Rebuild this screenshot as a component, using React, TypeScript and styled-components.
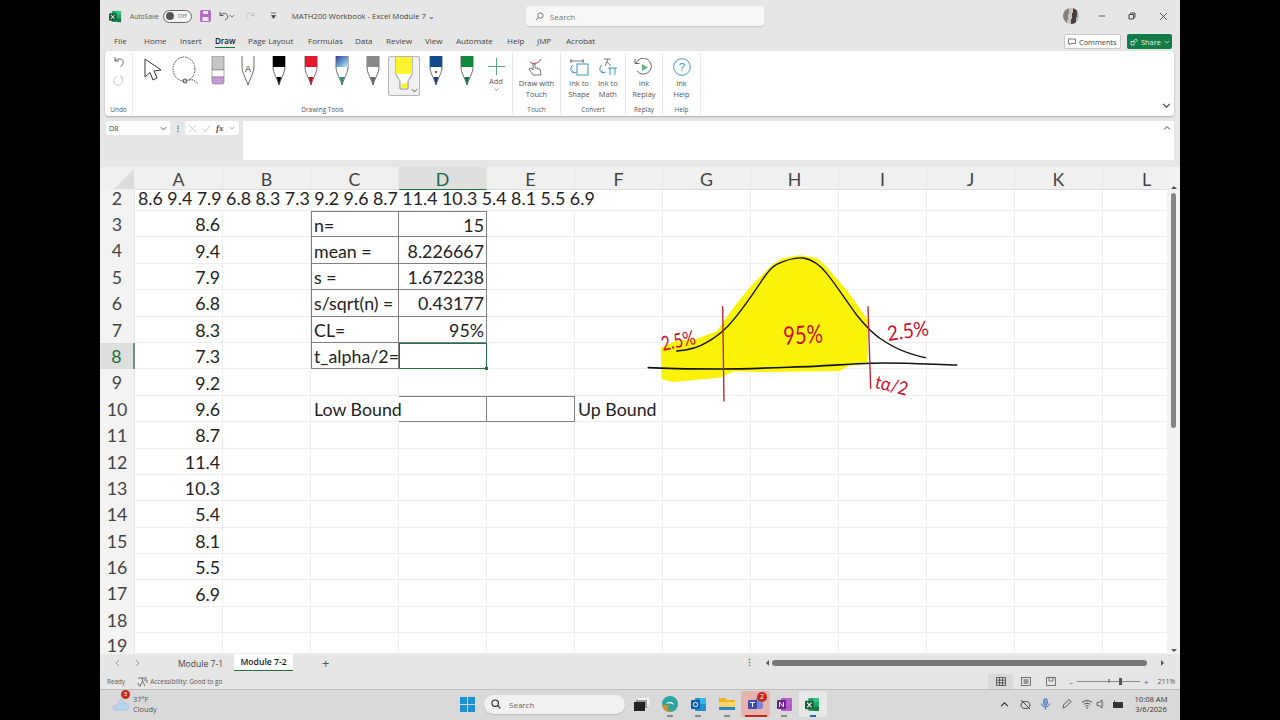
import React from "react";
import styled, { createGlobalStyle } from "styled-components";

const Global = createGlobalStyle`
  html, body { margin: 0; padding: 0; background: #000; }
  * { box-sizing: border-box; }
  body { font-family: "Open Sans", "Noto Sans", sans-serif; color: #333; }
`;

const Page = styled.div`
  width: 1280px;
  height: 720px;
  background: #000;
  display: flex;
  justify-content: center;
  overflow: hidden;
`;

const Win = styled.div`
  width: 1080px;
  height: 720px;
  background: #e6e6e6;
  display: flex;
  flex-direction: column;
  overflow: hidden;
`;

/* title bar */
const TitleBar = styled.div`
  height: 32px;
  display: flex;
  align-items: center;
  padding-left: 9px;
  font-size: 7.6px;
  color: #444;
`;
const AutoSave = styled.span`
  margin-left: 8px;
  font-size: 6.6px;
  color: #555;
`;
const Toggle = styled.span`
  width: 29px;
  height: 13px;
  margin-left: 4px;
  border: 1px solid #666;
  border-radius: 7px;
  background: #f4f4f4;
  display: flex;
  align-items: center;
  padding-left: 2px;
  gap: 4px;
  font-size: 6px;
  color: #666;
  &::before {
    content: "";
    width: 8px;
    height: 8px;
    border-radius: 50%;
    background: #555;
  }
`;
const QatIcon = styled.svg<{ $ml: number }>`
  margin-left: ${(p) => p.$ml}px;
  flex: none;
`;
const DocTitle = styled.span`
  margin-left: 15px;
  width: 234px;
  font-size: 7.7px;
  color: #444;
  white-space: nowrap;
`;
const SearchBox = styled.div`
  width: 238px;
  height: 20px;
  background: #f7f7f7;
  border-radius: 3px;
  box-shadow: 0 1px 1px #c9c9c9;
  display: flex;
  align-items: center;
  gap: 6px;
  padding-left: 9px;
  font-size: 8px;
  color: #777;
`;
const Avatar = styled.span`
  width: 16px;
  height: 16px;
  margin-left: 299px;
  border-radius: 50%;
  background: linear-gradient(100deg, #8b8078 0 35%, #c9c4bd 35% 55%, #4a3d3d 55% 80%, #a7bcc0 80%);
`;
const WinBtns = styled.div`
  margin-left: 19px;
  width: 70px;
  display: flex;
  justify-content: space-between;
  align-items: center;
`;

/* tabs */
const TabRow = styled.div`
  height: 19px;
  display: flex;
  align-items: center;
  padding: 0 8px 2px 14px;
  font-size: 8px;
  color: #444;
`;
const Tab = styled.span<{ $w: number; $on?: boolean }>`
  width: ${(p) => p.$w}px;
  flex: none;
  white-space: nowrap;
  position: relative;
  font-weight: ${(p) => (p.$on ? 600 : 400)};
  color: ${(p) => (p.$on ? "#222" : "#444")};
  ${(p) =>
    p.$on &&
    `&::after{content:"";position:absolute;left:0;width:20px;bottom:-2px;height:1.5px;background:#217346;}`}
`;
const TabBtns = styled.div`
  margin-left: auto;
  display: flex;
  gap: 6px;
  margin-top: 2px;
`;
const CommentBtn = styled.span`
  width: 57px;
  height: 15px;
  background: #fff;
  border: 1px solid #c8c8c8;
  border-radius: 2px;
  font-size: 7.4px;
  display: flex;
  align-items: center;
  gap: 3px;
  padding-left: 3px;
  color: #444;
`;
const ShareBtn = styled.span`
  width: 45px;
  height: 15px;
  background: #127c46;
  border-radius: 2px;
  color: #e6f3ec;
  font-size: 7.4px;
  display: flex;
  align-items: center;
  gap: 3px;
  padding-left: 3px;
`;

/* ribbon */
const Ribbon = styled.div`
  height: 65px;
  margin: 0 6px 0 5px;
  background: #fff;
  border-radius: 4px;
  box-shadow: 0 1px 2px #aaa;
  display: flex;
  position: relative;
`;
const Group = styled.div<{ $w: number }>`
  width: ${(p) => p.$w}px;
  flex: none;
  border-right: 1px solid #e8e8e8;
  margin: 2px 0 2px;
  display: flex;
  flex-direction: column;
`;
const GroupBody = styled.div<{ $gap?: number }>`
  flex: 1;
  display: flex;
  justify-content: center;
  gap: ${(p) => p.$gap ?? 0}px;
`;
const GroupLabel = styled.div`
  height: 9px;
  line-height: 9px;
  font-size: 6.4px;
  text-align: center;
  color: #555;
`;
const ToolStrip = styled.div`
  flex: 1;
  display: flex;
  align-items: flex-start;
  padding-left: 5px;
`;
const Tool = styled.div<{ $w: number; $selected?: boolean }>`
  width: ${(p) => p.$w}px;
  height: 40px;
  flex: none;
  display: flex;
  justify-content: center;
  margin-top: 3px;
  position: relative;
  ${(p) =>
    p.$selected &&
    `background:#f0f0f0;border:1px solid #b5b5b5;border-radius:2px;`}
`;
const RibbonBtn = styled.div`
  display: flex;
  flex-direction: column;
  align-items: center;
  padding-top: 5px;
  font-size: 7.5px;
  line-height: 10.5px;
  color: #555;
  text-align: center;
  white-space: nowrap;
  svg { margin-bottom: 2px; }
`;
const AddBtn = styled(RibbonBtn)`
  width: 28px;
  padding-top: 5px;
  svg:first-child { margin-bottom: 1px; }
`;
const UndoStack = styled.div`
  display: flex;
  flex-direction: column;
  align-items: center;
  gap: 6px;
  padding-top: 3px;
`;
const RibbonChevron = styled.svg`
  position: absolute;
  right: 3px;
  bottom: 6px;
`;

/* formula bar */
const FormulaBar = styled.div`
  height: 40px;
  margin: 5px 6px 0;
  display: flex;
  align-items: flex-start;
`;
const NameBox = styled.div`
  width: 64px;
  height: 14px;
  background: #fff;
  border-radius: 2px;
  font-size: 7.4px;
  line-height: 14px;
  padding-left: 3px;
  color: #444;
  position: relative;
`;
const Dots = styled.span`
  width: 15px;
  text-align: center;
  font-size: 8px;
  line-height: 13px;
  font-weight: 700;
  color: #666;
`;
const FxBox = styled.div`
  width: 54px;
  height: 14px;
  background: #fff;
  border-radius: 2px;
  display: flex;
  align-items: center;
  gap: 5px;
  padding-left: 3px;
  color: #bbb;
  font-size: 8px;
`;
const FxLabel = styled.i`
  font-family: "Liberation Serif", serif;
  font-weight: 700;
  color: #555;
  font-size: 9px;
`;
const FormulaInput = styled.div`
  flex: 1;
  height: 39px;
  margin-left: 4px;
  background: #fff;
  position: relative;
`;

/* sheet */
const SheetArea = styled.div`
  margin-top: 6px;
  height: 487px;
  display: flex;
  background: #fff;
`;
const GridWrap = styled.div`
  position: relative;
  flex: 1;
  overflow: hidden;
`;
const Grid = styled.div`
  display: grid;
  grid-template-columns: 35px repeat(12, 88px);
  grid-template-rows: 23px 21px repeat(16, 26.4px) 20.6px;
  font-family: Lato, "Liberation Sans", sans-serif;
  font-size: 17.8px;
  line-height: 16px;
  color: #222;
`;
const Corner = styled.div`
  background: #f0f0f0;
  position: relative;
  &::after {
    content: "";
    position: absolute;
    right: 1px;
    bottom: 1px;
    border-style: solid;
    border-width: 0 0 20px 20px;
    border-color: transparent transparent #dcdcdc transparent;
  }
`;
const ColHead = styled.div<{ $on?: boolean }>`
  background: ${(p) => (p.$on ? "#dedede" : "#f0f0f0")};
  color: ${(p) => (p.$on ? "#1c6b40" : "#444")};
  border-right: 1px solid #e6e6e6;
  border-bottom: 1px solid ${(p) => (p.$on ? "#217346" : "#dcdcdc")};
  display: flex;
  align-items: center;
  justify-content: center;
  padding-top: 1px;
`;
const RowHead = styled.div<{ $on?: boolean; $top?: number }>`
  background: ${(p) => (p.$on ? "#dcdfdd" : "#f3f3f3")};
  color: ${(p) => (p.$on ? "#1c6b40" : "#444")};
  border-right: ${(p) => (p.$on ? "2px solid #6f8f80" : "1px solid #e6e6e6")};
  display: flex;
  align-items: flex-start;
  padding-top: ${(p) => p.$top ?? 5}px;
  justify-content: center;
`;
const Cell = styled.div<{ $edges?: string; $right?: boolean; $span?: number; $open?: boolean }>`
  display: flex;
  align-items: center;
  justify-content: ${(p) => (p.$right ? "flex-end" : "flex-start")};
  padding: 1px 2px 0 ${(p) => (p.$edges?.includes("l") ? 2 : 3)}px;
  white-space: nowrap;
  grid-column: span ${(p) => p.$span ?? 1};
  border-right: ${(p) =>
    p.$open ? "0" : `1px solid ${p.$edges?.includes("r") ? "#808080" : "#eeeeee"}`};
  border-bottom: 1px solid ${(p) => (p.$edges?.includes("b") ? "#808080" : "#eeeeee")};
  border-top: ${(p) => (p.$edges?.includes("t") ? "1px solid #808080" : "0")};
  border-left: ${(p) => (p.$edges?.includes("l") ? "1px solid #808080" : "0")};
`;
const DataLine = styled(Cell)`
  align-items: flex-start;
  padding-top: 0;
`;
const ActiveCell = styled.div`
  border: 1px solid #217346;
  position: relative;
  &::after {
    content: "";
    position: absolute;
    right: -2px;
    bottom: -2px;
    width: 3px;
    height: 3px;
    background: #217346;
  }
`;
const InkLayer = styled.svg`
  position: absolute;
  left: 540px;
  top: 78px;
  width: 330px;
  height: 170px;
  pointer-events: none;
`;
const InkText = styled.text`
  font-family: "Lato", "Liberation Sans", sans-serif;
  font-weight: 400;
  fill: #c8102e;
`;
const VScroll = styled.div`
  width: 13px;
  background: #f2f2f2;
  display: flex;
  flex-direction: column;
  align-items: center;
  justify-content: space-between;
  padding: 19px 0 2px;
`;
const VThumb = styled.div`
  width: 5px;
  height: 235px;
  margin-top: 4px;
  margin-bottom: auto;
  border-radius: 3px;
  background: #858585;
`;

/* sheet tabs */
const SheetTabs = styled.div`
  height: 20px;
  display: flex;
  align-items: flex-start;
  font-size: 8.6px;
  color: #444;
  padding-left: 14px;
`;
const NavArrows = styled.div`
  width: 53px;
  height: 18px;
  display: flex;
  gap: 15px;
  align-items: center;
`;
const SheetTab = styled.div<{ $on?: boolean }>`
  height: ${(p) => (p.$on ? 17 : 20)}px;
  width: ${(p) => (p.$on ? 59 : 67)}px;
  display: flex;
  align-items: center;
  justify-content: center;
  background: ${(p) => (p.$on ? "#fff" : "transparent")};
  color: ${(p) => (p.$on ? "#222" : "#444")};
  font-weight: ${(p) => (p.$on ? 600 : 400)};
  border-bottom: ${(p) => (p.$on ? "1.5px solid #1f6f43" : "0")};
`;
const PlusBtn = styled.span`
  margin-left: 29px;
  line-height: 18px;
  font-size: 13px;
  color: #555;
`;
const SplitDots = styled.span`
  margin-left: 416px;
  line-height: 18px;
  font-size: 9px;
  font-weight: 700;
  color: #666;
`;
const HScroll = styled.div`
  margin-left: 12px;
  width: 402px;
  height: 18px;
  display: flex;
  align-items: center;
  gap: 3px;
`;
const HThumb = styled.div`
  width: 375px;
  height: 6px;
  border-radius: 3px;
  background: #777;
`;
const Arrow = styled.span<{ $dir: "l" | "r" | "u" | "d"; $gap?: number }>`
  width: 0;
  height: 0;
  flex: none;
  margin-left: ${(p) => p.$gap ?? 0}px;
  border: 3.5px solid transparent;
  ${(p) =>
    p.$dir === "l"
      ? "border-right-color:#555;border-left-width:0;"
      : p.$dir === "r"
      ? "border-left-color:#555;border-right-width:0;"
      : p.$dir === "u"
      ? "border-bottom-color:#555;border-top-width:0;"
      : "border-top-color:#555;border-bottom-width:0;"}
`;

/* status bar */
const StatusBar = styled.div`
  height: 16px;
  border-bottom: 1px solid #bdbdbd;
  display: flex;
  align-items: center;
  padding-left: 7px;
  font-size: 6.4px;
  color: #555;
`;
const StatusIcon = styled.svg`
  margin-left: 12px;
  margin-right: 2px;
`;
const ViewBtns = styled.div`
  margin-left: auto;
  display: flex;
  align-items: center;
  height: 15px;
`;
const ViewBtn = styled.span<{ $on?: boolean }>`
  width: 25px;
  height: 15px;
  display: flex;
  align-items: center;
  justify-content: center;
  background: ${(p) => (p.$on ? "#d9d9d9" : "transparent")};
`;
const ZoomCtl = styled.div`
  width: 111px;
  margin-left: 6px;
  display: flex;
  align-items: center;
  gap: 4px;
  font-size: 8px;
`;
const ZoomTrack = styled.span`
  width: 63px;
  height: 1.5px;
  background: #888;
  position: relative;
  &::before {
    content: "";
    position: absolute;
    left: 31px;
    top: -1.5px;
    width: 1.5px;
    height: 4px;
    background: #888;
  }
  &::after {
    content: "";
    position: absolute;
    left: 42px;
    top: -3px;
    width: 3px;
    height: 7px;
    background: #555;
  }
`;
const ZoomPct = styled.span`
  margin-left: 5px;
  font-size: 7px;
  color: #555;
`;

/* taskbar */
const Taskbar = styled.div`
  height: 30px;
  background: #d9d9d9;
  display: flex;
  align-items: center;
  padding: 0 8px 2px 12px;
  position: relative;
`;
const Weather = styled.div`
  width: 348px;
  display: flex;
  align-items: center;
  gap: 3px;
  font-size: 7.4px;
  line-height: 10.5px;
  color: #555;
  position: relative;
`;
const WeatherBadge = styled.span`
  position: absolute;
  left: 9px;
  top: -4px;
  width: 9px;
  height: 9px;
  border-radius: 50%;
  background: #c42b1c;
  color: #fff;
  font-size: 6px;
  line-height: 9px;
  text-align: center;
`;
const TaskSearch = styled.div`
  margin-left: 9px;
  width: 141px;
  height: 19px;
  border-radius: 10px;
  background: #f1f1f1;
  box-shadow: 0 1px 1px #bbb;
  display: flex;
  align-items: center;
  gap: 8px;
  padding-left: 7px;
  font-size: 8px;
  color: #666;
`;
const TaskApps = styled.div`
  margin-left: 2px;
  display: flex;
  align-items: center;
`;
const TaskApp = styled.div<{ $bg?: string; $bar?: string }>`
  width: 28.6px;
  height: 26px;
  display: flex;
  align-items: center;
  justify-content: center;
  position: relative;
  border-radius: 2px;
  background: ${(p) => p.$bg ?? "transparent"};
  ${(p) =>
    p.$bar &&
    `&::after{content:"";position:absolute;bottom:0;left:50%;transform:translateX(-50%);height:2px;width:${
      p.$bar === "#c42b1c" ? 22 : 6
    }px;background:${p.$bar};}`}
`;
const AppBadge = styled.span`
  position: absolute;
  right: 3px;
  top: 1px;
  width: 10px;
  height: 10px;
  border-radius: 50%;
  background: #c42b1c;
  color: #fff;
  font-size: 7px;
  line-height: 10px;
  text-align: center;
`;
const Tray = styled.div`
  margin-left: auto;
  display: flex;
  align-items: center;
`;
const TrayIcon = styled.span<{ $w: number }>`
  width: ${(p) => p.$w}px;
  display: flex;
  justify-content: center;
`;
const Clock = styled.div`
  width: 42px;
  text-align: center;
  font-size: 7.6px;
  line-height: 10.5px;
  color: #333;
  white-space: nowrap;
`;

/* drawings */
const Pen = ({ top, tip, nib, paint }: { top: string; tip: string; nib?: string; paint?: boolean }) => (
  <svg width="16" height="30" viewBox="0 0 16 30">
    {paint && (
      <defs>
        <linearGradient id="gal" x1="0" y1="0" x2="1" y2="1">
          <stop offset="0" stopColor="#3a3a8c" />
          <stop offset="0.6" stopColor="#6fa8dc" />
          <stop offset="1" stopColor="#d8eef0" />
        </linearGradient>
      </defs>
    )}
    <path d="M2 0V11C2 17 6 22 8 29C10 22 14 17 14 11V0Z" fill="#fff" stroke="#444" strokeWidth="0.8" />
    <path d="M2 0V11H14V0Z" fill={paint ? "url(#gal)" : top} />
    <path d="M5.6 21C6.5 24 7.4 26 8 29C8.6 26 9.5 24 10.4 21Z" fill={tip} />
    {nib && <circle cx="8" cy="16" r="1" fill={nib} />}
  </svg>
);

const Ink = () => (
  <InkLayer viewBox="0 0 990 510">
    <path
      d="M65 310L110 290L170 285L235 260L240 250L290 180L340 120L400 60L430 42L480 34L530 42L560 70L620 140L680 225L680 350L620 362L600 375L350 378L280 376L240 395L100 408L68 400Z"
      fill="#fbf20a"
      stroke="#fbf20a"
      strokeWidth="6"
      strokeLinejoin="round"
    />
    <path
      d="M110 318C150 315 175 308 200 292C225 278 245 262 262 245C300 205 330 160 360 115C375 92 390 68 410 58C440 44 465 36 490 39C520 44 540 60 560 85C590 122 620 170 650 210C670 235 690 260 720 280C745 298 770 312 800 322C820 329 840 335 857 338"
      fill="none"
      stroke="#111"
      strokeWidth="4"
      strokeLinecap="round"
    />
    <path
      d="M25 368C90 372 170 372 240 372C340 372 430 367 520 364C600 360 670 354 730 354C810 354 880 358 950 360"
      fill="none"
      stroke="#111"
      strokeWidth="5"
      strokeLinecap="round"
    />
    <path d="M248 185L252 468M684 185L692 430" fill="none" stroke="#b3202e" strokeWidth="4" strokeLinecap="round" />
    <InkText x="68" y="318" fontSize="60" textLength="104" lengthAdjust="spacingAndGlyphs" transform="rotate(-12 68 318)">2.5%</InkText>
    <InkText x="432" y="300" fontSize="76" textLength="118" lengthAdjust="spacingAndGlyphs" transform="rotate(-4 432 300)">95%</InkText>
    <InkText x="745" y="288" fontSize="62" textLength="125" lengthAdjust="spacingAndGlyphs" transform="rotate(-8 745 288)">2.5%</InkText>
    <InkText x="702" y="428" fontSize="56" textLength="100" lengthAdjust="spacingAndGlyphs" transform="rotate(14 702 428)">tα/2</InkText>
  </InkLayer>
);

const CloseIcon = ({ c = "#444" }: { c?: string }) => (
  <svg width="9" height="9" viewBox="0 0 9 9"><path d="M1 1L8 8M8 1L1 8" stroke={c} strokeWidth="0.9" /></svg>
);

const Chevron = ({ c = "#555", s = 7, up }: { c?: string; s?: number; up?: boolean }) => (
  <svg width={s} height={s} viewBox="0 0 8 8">
    <path d={up ? "M1 5.5L4 2.5L7 5.5" : "M1 2.5L4 5.5L7 2.5"} fill="none" stroke={c} strokeWidth="1" />
  </svg>
);

const ExcelLogo = ({ s = 13 }: { s?: number }) => (
  <svg width={s} height={s} viewBox="0 0 14 14">
    <rect x="3" y="1" width="10" height="12" rx="1" fill="#21a366" />
    <rect x="8" y="1" width="5" height="4" fill="#33c481" />
    <rect x="8" y="9" width="5" height="4" fill="#107c41" />
    <rect x="0" y="3.5" width="8" height="8" rx="1" fill="#185c37" />
    <path d="M2 5.3L6 9.7M6 5.3L2 9.7" stroke="#fff" strokeWidth="1" />
  </svg>
);

const rowValues = ["8.6", "9.4", "7.9", "6.8", "8.3", "7.3", "9.2", "9.6", "8.7", "11.4", "10.3", "5.4", "8.1", "5.5", "6.9"];
const statLabels = ["n=", "mean =", "s =", "s/sqrt(n) =", "CL=", "t_alpha/2="];
const statValues = ["15", "8.226667", "1.672238", "0.43177", "95%", ""];
const cols = ["A", "B", "C", "D", "E", "F", "G", "H", "I", "J", "K", "L"];

const SheetRow = ({ row }: { row: number }) => {
  const stat = row >= 3 && row <= 8 ? row - 3 : -1;
  const first = row === 3 ? "t" : "";
  return (
    <>
      <RowHead $on={row === 8} $top={row === 19 ? 4 : 5}>{row}</RowHead>
      <Cell $right>{rowValues[row - 3] ?? ""}</Cell>
      <Cell />
      {stat >= 0 ? (
        <>
          <Cell $edges={`lrb${first}`}>{statLabels[stat]}</Cell>
          {row === 8 ? <ActiveCell /> : <Cell $edges={`rb${first}`} $right>{statValues[stat]}</Cell>}
        </>
      ) : row === 10 ? (
        <>
          <Cell $open>Low Bound</Cell>
          <Cell $edges="rbt" />
          <Cell $edges="rbt" />
          <Cell>Up Bound</Cell>
        </>
      ) : (
        <>
          <Cell />
          <Cell />
        </>
      )}
      {(row === 10 ? cols.slice(6) : cols.slice(4)).map((c) => (
        <Cell key={c} />
      ))}
    </>
  );
};

export default function App() {
  return (
    <Page>
      <Global />
      <Win>
        <TitleBar>
          <ExcelLogo />
          <AutoSave>AutoSave</AutoSave>
          <Toggle>Off</Toggle>
          <QatIcon $ml={8} width="11" height="12" viewBox="0 0 11 12">
            <rect width="11" height="12" rx="1.5" fill="#b26fc0" />
            <rect x="3" y="1" width="5" height="3" fill="#f2e4f5" />
            <rect x="2.5" y="7" width="6" height="4" fill="#f2e4f5" />
          </QatIcon>
          <QatIcon $ml={8} width="10" height="10" viewBox="0 0 10 10">
            <path d="M1 1V4.5H4.5M1.2 4.5C3 2 6 1.5 8 3.5C9.5 5.5 8.5 8 6 9" fill="none" stroke="#444" strokeWidth="0.9" />
          </QatIcon>
          <Chevron s={6} />
          <QatIcon $ml={10} width="10" height="10" viewBox="0 0 10 10">
            <path d="M9 1V4.5H5.5M8.8 4.5C7 2 4 1.5 2 3.5C.5 5.5 1.5 8 4 9" fill="none" stroke="#bdbdbd" strokeWidth="0.9" />
          </QatIcon>
          <QatIcon $ml={15} width="7" height="8" viewBox="0 0 7 8">
            <path d="M1 1H6M1.5 3.5H5.5L3.5 6.5Z" fill="#444" stroke="#444" strokeWidth="0.7" />
          </QatIcon>
          <DocTitle>MATH200 Workbook - Excel Module 7 ⌄</DocTitle>
          <SearchBox>
            <svg width="9" height="9" viewBox="0 0 10 10"><circle cx="6" cy="4" r="3" fill="none" stroke="#666" /><path d="M3.8 6.2L1 9" stroke="#666" /></svg>
            Search
          </SearchBox>
          <Avatar />
          <WinBtns>
            <svg width="8" height="8" viewBox="0 0 8 8"><path d="M1 4H7" stroke="#555" /></svg>
            <svg width="8" height="8" viewBox="0 0 8 8"><path d="M2.5 1.5V1H7V5.5H6.5M1 2.5H5.5V7H1Z" fill="none" stroke="#444" /></svg>
            <CloseIcon />
          </WinBtns>
        </TitleBar>

        <TabRow>
          <Tab $w={30}>File</Tab>
          <Tab $w={36}>Home</Tab>
          <Tab $w={35}>Insert</Tab>
          <Tab $w={33} $on>Draw</Tab>
          <Tab $w={60}>Page Layout</Tab>
          <Tab $w={47}>Formulas</Tab>
          <Tab $w={31}>Data</Tab>
          <Tab $w={39}>Review</Tab>
          <Tab $w={31}>View</Tab>
          <Tab $w={51}>Automate</Tab>
          <Tab $w={30}>Help</Tab>
          <Tab $w={29}>JMP</Tab>
          <Tab $w={40}>Acrobat</Tab>
          <TabBtns>
            <CommentBtn>
              <svg width="8" height="8" viewBox="0 0 8 8"><path d="M.5 1H7.5V5.5H3L1.5 7V5.5H.5Z" fill="none" stroke="#555" strokeWidth="0.8" /></svg>
              Comments
            </CommentBtn>
            <ShareBtn>
              <svg width="8" height="8" viewBox="0 0 8 8"><path d="M1 3.5H4V7H1ZM3 3.5L6 1L7.5 2.5L5 4.5" fill="none" stroke="#e6f3ec" strokeWidth="0.8" /></svg>
              Share
              <Chevron c="#e6f3ec" s={6} />
            </ShareBtn>
          </TabBtns>
        </TabRow>

        <Ribbon>
          <Group $w={28}>
            <GroupBody>
              <UndoStack>
                <svg width="12" height="12" viewBox="0 0 12 12"><path d="M2 1V5H6M2.2 5C4 2.5 7.5 2 9.5 4C11 6 10 9 7.5 10.5" fill="none" stroke="#555" strokeWidth="0.9" /></svg>
                <svg width="12" height="12" viewBox="0 0 12 12"><path d="M8 1V4H11M8.5 3.5A4.5 4.5 0 1 1 4 2.5" fill="none" stroke="#c4c4c4" strokeWidth="0.9" /></svg>
              </UndoStack>
            </GroupBody>
            <GroupLabel>Undo</GroupLabel>
          </Group>
          <Group $w={380}>
            <ToolStrip>
              <Tool $w={30}>
                <svg width="20" height="28" viewBox="0 0 20 28"><path d="M2 3L2 21L7 16.5L10 24L14 22L11 15L18 14Z" fill="#fff" stroke="#333" strokeWidth="1" /></svg>
              </Tool>
              <Tool $w={35}>
                <svg width="30" height="30" viewBox="0 0 30 30"><ellipse cx="13" cy="13" rx="11" ry="12" fill="none" stroke="#444" strokeDasharray="1.5 1" /><circle cx="14" cy="25" r="2" fill="none" stroke="#444" /><path d="M18 24C22 23 25 25 27 28" fill="none" stroke="#444" strokeDasharray="1.5 1" /></svg>
              </Tool>
              <Tool $w={30}>
                <svg width="14" height="30" viewBox="0 0 14 30"><rect x="1" y="0" width="12" height="14" fill="#c6c6c6" stroke="#777" strokeWidth="0.6" /><rect x="1" y="14" width="12" height="7" fill="#fff" stroke="#777" strokeWidth="0.6" /><path d="M1 21H13V26Q13 28 11 28H3Q1 28 1 26Z" fill="#c79ad6" stroke="#777" strokeWidth="0.6" /></svg>
              </Tool>
              <Tool $w={30}>
                <svg width="16" height="30" viewBox="0 0 16 30">
                  <path d="M2 0V11C2 17 6 22 8 29C10 22 14 17 14 11V0" fill="#fff" stroke="#444" strokeWidth="0.8" />
                  <text x="8" y="16" fontSize="9" textAnchor="middle" fill="#333" fontFamily="Liberation Sans, sans-serif">A</text>
                </svg>
              </Tool>
              <Tool $w={32}><Pen top="#000" tip="#000" /></Tool>
              <Tool $w={31}><Pen top="#e51a2c" tip="#b5122a" /></Tool>
              <Tool $w={31}><Pen top="" paint tip="#2a8f80" /></Tool>
              <Tool $w={31}><Pen top="#8a8a8a" tip="#666" /></Tool>
              <Tool $w={32} $selected>
                <svg width="18" height="37" viewBox="0 0 18 37">
                  <path d="M1 0H17V18L13 24V32H5V24L1 18Z" fill="#fff" stroke="#666" strokeWidth="0.7" />
                  <path d="M1 0H17V17H1Z" fill="#fdf42d" />
                  <path d="M6 27L12 26V31H6Z" fill="#fdf42d" />
                </svg>
                <RibbonChevron width="7" height="7" viewBox="0 0 8 8" style={{ right: 1, bottom: 1 }}>
                  <path d="M1 2.5L4 5.5L7 2.5" fill="none" stroke="#444" />
                </RibbonChevron>
              </Tool>
              <Tool $w={31}><Pen top="#114b8b" tip="#0f3e6e" nib="#222" /></Tool>
              <Tool $w={31}><Pen top="#10893e" tip="#0a6b4e" /></Tool>
              <AddBtn>
                <svg width="17" height="17" viewBox="0 0 17 17"><path d="M8.5 0V17M0 8.5H17" stroke="#5aa77f" /></svg>
                Add
                <Chevron s={5} />
              </AddBtn>
            </ToolStrip>
            <GroupLabel>Drawing Tools</GroupLabel>
          </Group>
          <Group $w={48}>
            <GroupBody>
              <RibbonBtn>
                <svg width="20" height="18" viewBox="0 0 20 18"><path d="M4 4C7 7 13 5 15 1" fill="none" stroke="#c4314b" strokeWidth="1" /><path d="M7 17L3 11L5 10L7 12V6H9V10H11.5V11H14L15 17Z" fill="#fff" stroke="#555" strokeWidth="0.8" /></svg>
                <span>Draw with</span>
                <span>Touch</span>
              </RibbonBtn>
            </GroupBody>
            <GroupLabel>Touch</GroupLabel>
          </Group>
          <Group $w={65}>
            <GroupBody $gap={8}>
              <RibbonBtn>
                <svg width="20" height="18" viewBox="0 0 20 18"><path d="M1 3H15M2 1V5M14 1V5" stroke="#555" strokeWidth="0.8" /><rect x="8" y="6" width="11" height="11" fill="none" stroke="#3f93b8" /><path d="M4 7C1 9 1 14 5 15M5 15L3.5 12.5M5 15L7.5 14" fill="none" stroke="#3f93b8" /></svg>
                <span>Ink to</span>
                <span>Shape</span>
              </RibbonBtn>
              <RibbonBtn>
                <svg width="20" height="18" viewBox="0 0 20 18"><path d="M6 1H13M10 1L7 8M9 4L13 8" fill="none" stroke="#555" strokeWidth="0.8" /><path d="M10 10H19M12 10V17M17 10V17" fill="none" stroke="#3f93b8" /><path d="M4 7C1 9 1 14 5 15M5 15L3.5 12.5M5 15L7.5 14" fill="none" stroke="#3f93b8" /></svg>
                <span>Ink to</span>
                <span>Math</span>
              </RibbonBtn>
            </GroupBody>
            <GroupLabel>Convert</GroupLabel>
          </Group>
          <Group $w={37}>
            <GroupBody>
              <RibbonBtn>
                <svg width="20" height="18" viewBox="0 0 20 18"><path d="M2 5A8 8 0 1 1 3 13" fill="none" stroke="#555" strokeWidth="0.9" /><path d="M1 1V5.5H5.5" fill="none" stroke="#555" strokeWidth="0.9" /><path d="M8 6L14 9.5L8 13Z" fill="#5fb878" /></svg>
                <span>Ink</span>
                <span>Replay</span>
              </RibbonBtn>
            </GroupBody>
            <GroupLabel>Replay</GroupLabel>
          </Group>
          <Group $w={38}>
            <GroupBody>
              <RibbonBtn>
                <svg width="18" height="18" viewBox="0 0 19 19"><circle cx="9.5" cy="9.5" r="8.8" fill="none" stroke="#3f93b8" /><text x="9.5" y="14" fontSize="12" textAnchor="middle" fill="#3f93b8" fontFamily="Liberation Sans, sans-serif">?</text></svg>
                <span>Ink</span>
                <span>Help</span>
              </RibbonBtn>
            </GroupBody>
            <GroupLabel>Help</GroupLabel>
          </Group>
          <RibbonChevron width="9" height="9" viewBox="0 0 8 8">
            <path d="M1 2.5L4 5.5L7 2.5" fill="none" stroke="#444" />
          </RibbonChevron>
        </Ribbon>

        <FormulaBar>
          <NameBox>
            D8
            <RibbonChevron width="7" height="7" viewBox="0 0 8 8" style={{ bottom: 3 }}>
              <path d="M1 2.5L4 5.5L7 2.5" fill="none" stroke="#444" />
            </RibbonChevron>
          </NameBox>
          <Dots>⋮</Dots>
          <FxBox>
            <CloseIcon c="#c8c8c8" />
            <svg width="9" height="9" viewBox="0 0 9 9"><path d="M1 5L3.5 8L8 1" fill="none" stroke="#c8c8c8" /></svg>
            <FxLabel>fx</FxLabel>
            <Chevron s={6} c="#999" />
          </FxBox>
          <FormulaInput>
            <RibbonChevron width="8" height="8" viewBox="0 0 8 8" style={{ top: 3, bottom: "auto" }}>
              <path d="M1 5.5L4 2.5L7 5.5" fill="none" stroke="#444" />
            </RibbonChevron>
          </FormulaInput>
        </FormulaBar>

        <SheetArea>
          <GridWrap>
            <Grid>
              <Corner />
              {cols.map((c) => (
                <ColHead key={c} $on={c === "D"}>{c}</ColHead>
              ))}
              <RowHead $top={0}>2</RowHead>
              <DataLine $span={6}>8.6 9.4 7.9 6.8 8.3 7.3 9.2 9.6 8.7 11.4 10.3 5.4 8.1 5.5 6.9</DataLine>
              {cols.slice(6).map((c) => (
                <Cell key={c} />
              ))}
              {Array.from({ length: 17 }, (_, i) => (
                <SheetRow key={i} row={i + 3} />
              ))}
            </Grid>
            <Ink />
          </GridWrap>
          <VScroll>
            <Arrow $dir="u" />
            <VThumb />
            <Arrow $dir="d" />
          </VScroll>
        </SheetArea>

        <SheetTabs>
          <NavArrows>
            <svg width="6" height="8" viewBox="0 0 6 8"><path d="M5 1L2 4L5 7" fill="none" stroke="#999" /></svg>
            <svg width="6" height="8" viewBox="0 0 6 8"><path d="M1 1L4 4L1 7" fill="none" stroke="#999" /></svg>
          </NavArrows>
          <SheetTab>Module 7-1</SheetTab>
          <SheetTab $on>Module 7-2</SheetTab>
          <PlusBtn>+</PlusBtn>
          <SplitDots>⋮</SplitDots>
          <HScroll>
            <Arrow $dir="l" />
            <HThumb />
            <Arrow $dir="r" $gap={11} />
          </HScroll>
        </SheetTabs>

        <StatusBar>
          Ready
          <StatusIcon width="11" height="11" viewBox="0 0 11 11">
            <path d="M1 2H10M5.5 2V5M3 10L5.5 5L8 10M1 7A3 3 0 0 0 4 10M7 4H10V7" fill="none" stroke="#555" strokeWidth="0.8" />
          </StatusIcon>
          Accessibility: Good to go
          <ViewBtns>
            <ViewBtn $on>
              <svg width="10" height="9" viewBox="0 0 10 9"><path d="M.5.5H9.5V8.5H.5ZM.5 3.2H9.5M.5 5.8H9.5M3.5.5V8.5M6.5.5V8.5" fill="none" stroke="#444" strokeWidth="0.8" /></svg>
            </ViewBtn>
            <ViewBtn>
              <svg width="10" height="9" viewBox="0 0 10 9"><rect x=".5" y=".5" width="9" height="8" fill="none" stroke="#555" strokeWidth="0.8" /><rect x="2.5" y="2" width="5" height="5" fill="#999" /></svg>
            </ViewBtn>
            <ViewBtn>
              <svg width="10" height="9" viewBox="0 0 10 9"><path d="M.5.5H9.5V8.5H.5ZM3 .5V4H7V.5" fill="none" stroke="#555" strokeWidth="0.8" /></svg>
            </ViewBtn>
          </ViewBtns>
          <ZoomCtl>
            –
            <ZoomTrack />
            +
            <ZoomPct>211%</ZoomPct>
          </ZoomCtl>
        </StatusBar>

        <Taskbar>
          <Weather>
            <svg width="18" height="14" viewBox="0 0 18 14"><path d="M1 11C1 9 3 8 5 8L9 2L12 6C15 6 17 8 17 10C17 12 15 13 13 13H3C2 13 1 12 1 11Z" fill="#b9d3ee" stroke="#8fb2d8" strokeWidth="0.5" /></svg>
            <WeatherBadge>3</WeatherBadge>
            <div>
              <div>37°F</div>
              <div>Cloudy</div>
            </div>
          </Weather>
          <svg width="15" height="15" viewBox="0 0 15 15">
            <path d="M0 0H7V7H0ZM8 0H15V7H8ZM0 8H7V15H0ZM8 8H15V15H8Z" fill="#1f8fd6" />
          </svg>
          <TaskSearch>
            <svg width="10" height="10" viewBox="0 0 10 10"><circle cx="4.2" cy="4.2" r="3.2" fill="none" stroke="#222" strokeWidth="1.1" /><path d="M6.6 6.6L9.4 9.4" stroke="#222" strokeWidth="1.1" /></svg>
            Search
          </TaskSearch>
          <TaskApps>
            <TaskApp>
              <svg width="15" height="13" viewBox="0 0 15 13"><rect x="4" y="0" width="11" height="8" fill="#f4f4f4" /><rect x="2" y="2" width="11" height="8" fill="#999" /><rect x="0" y="4" width="11" height="9" fill="#222" /></svg>
            </TaskApp>
            <TaskApp $bar="#8a8a8a">
              <svg width="16" height="16" viewBox="0 0 16 16"><circle cx="8" cy="8" r="8" fill="#2aa5a0" /><path d="M0 9A8 8 0 0 0 10 15.8C5 15 4 11 8 9Z" fill="#d8912a" /><path d="M4 8C6 5 11 5 12 9C9 7 7 7 4 8Z" fill="#e8f4f0" /></svg>
            </TaskApp>
            <TaskApp $bar="#8a8a8a">
              <svg width="15" height="15" viewBox="0 0 15 15"><rect x="4" y="1" width="11" height="13" rx="1" fill="#1f8fd6" /><rect x="9" y="1" width="6" height="6" fill="#35b8e8" /><rect y="3" width="9" height="9" rx="1" fill="#0f5ca8" /><circle cx="4.5" cy="7.5" r="2.2" fill="none" stroke="#fff" /></svg>
            </TaskApp>
            <TaskApp $bar="#8a8a8a">
              <svg width="16" height="14" viewBox="0 0 16 14"><path d="M0 1H6L8 3H16V13H0Z" fill="#e8b52a" /><rect y="5" width="16" height="8" fill="#f6d565" /><rect x="0" y="10" width="16" height="3" fill="#2b88c8" /></svg>
            </TaskApp>
            <TaskApp $bg="#e7b3ae" $bar="#c42b1c">
              <svg width="15" height="14" viewBox="0 0 15 14"><circle cx="10" cy="3" r="2.4" fill="#7b83d8" /><rect x="7" y="5" width="8" height="7" rx="2" fill="#7b83d8" /><rect y="3" width="9" height="9" rx="1" fill="#3f4aa8" /><path d="M2 5.5H7M4.5 5.5V10" stroke="#fff" /></svg>
              <AppBadge>2</AppBadge>
            </TaskApp>
            <TaskApp $bar="#8a8a8a">
              <svg width="15" height="15" viewBox="0 0 15 15"><rect x="4" y="1" width="11" height="13" rx="1" fill="#b65cc8" /><rect y="3" width="9" height="9" rx="1" fill="#6a1f90" /><path d="M2.5 10V5L6.5 10V5" fill="none" stroke="#fff" /></svg>
            </TaskApp>
            <TaskApp $bg="#e8e8e8" $bar="#1f6fbf">
              <ExcelLogo s={15} />
            </TaskApp>
          </TaskApps>
          <Tray>
            <TrayIcon $w={20}><Chevron c="#333" s={9} up /></TrayIcon>
            <TrayIcon $w={22}>
              <svg width="11" height="11" viewBox="0 0 11 11"><ellipse cx="5.5" cy="6" rx="4.5" ry="3.5" fill="none" stroke="#444" /><path d="M1 1L10 10" stroke="#444" /></svg>
            </TrayIcon>
            <TrayIcon $w={18}>
              <svg width="11" height="12" viewBox="0 0 11 12"><rect x="3.5" y="0.5" width="4" height="7" rx="2" fill="#6f9fd8" stroke="#3f6fb8" strokeWidth="0.6" /><path d="M1.5 5.5C1.5 10 9.5 10 9.5 5.5M5.5 9V11.5" fill="none" stroke="#3f6fb8" /></svg>
            </TrayIcon>
            <TrayIcon $w={24}>
              <svg width="11" height="12" viewBox="0 0 11 12"><path d="M2 10L2.5 7L8 1.5L10 3.5L4.5 9Z" fill="none" stroke="#555" /></svg>
            </TrayIcon>
            <TrayIcon $w={18}>
              <svg width="12" height="10" viewBox="0 0 12 10"><path d="M1 3.5C4 1 8 1 11 3.5M2.8 5.5C4.8 3.8 7.2 3.8 9.2 5.5M4.5 7.3C5.5 6.5 6.5 6.5 7.5 7.3" fill="none" stroke="#444" /><circle cx="6" cy="9" r="0.8" fill="#444" /></svg>
            </TrayIcon>
            <TrayIcon $w={10}>
              <svg width="10" height="10" viewBox="0 0 10 10"><path d="M1 3.5H3L6 1V9L3 6.5H1Z" fill="none" stroke="#444" strokeWidth="0.8" /><path d="M7.5 3.5C8.3 4.5 8.3 5.5 7.5 6.5" fill="none" stroke="#aaa" strokeWidth="0.8" /></svg>
            </TrayIcon>
            <TrayIcon $w={24}>
              <svg width="12" height="10" viewBox="0 0 12 10"><path d="M1 3H2L3 .5V3H11V9H1Z" fill="#333" /></svg>
            </TrayIcon>
            <Clock>
              <div>10:08 AM</div>
              <div>3/6/2026</div>
            </Clock>
          </Tray>
        </Taskbar>
      </Win>
    </Page>
  );
}
